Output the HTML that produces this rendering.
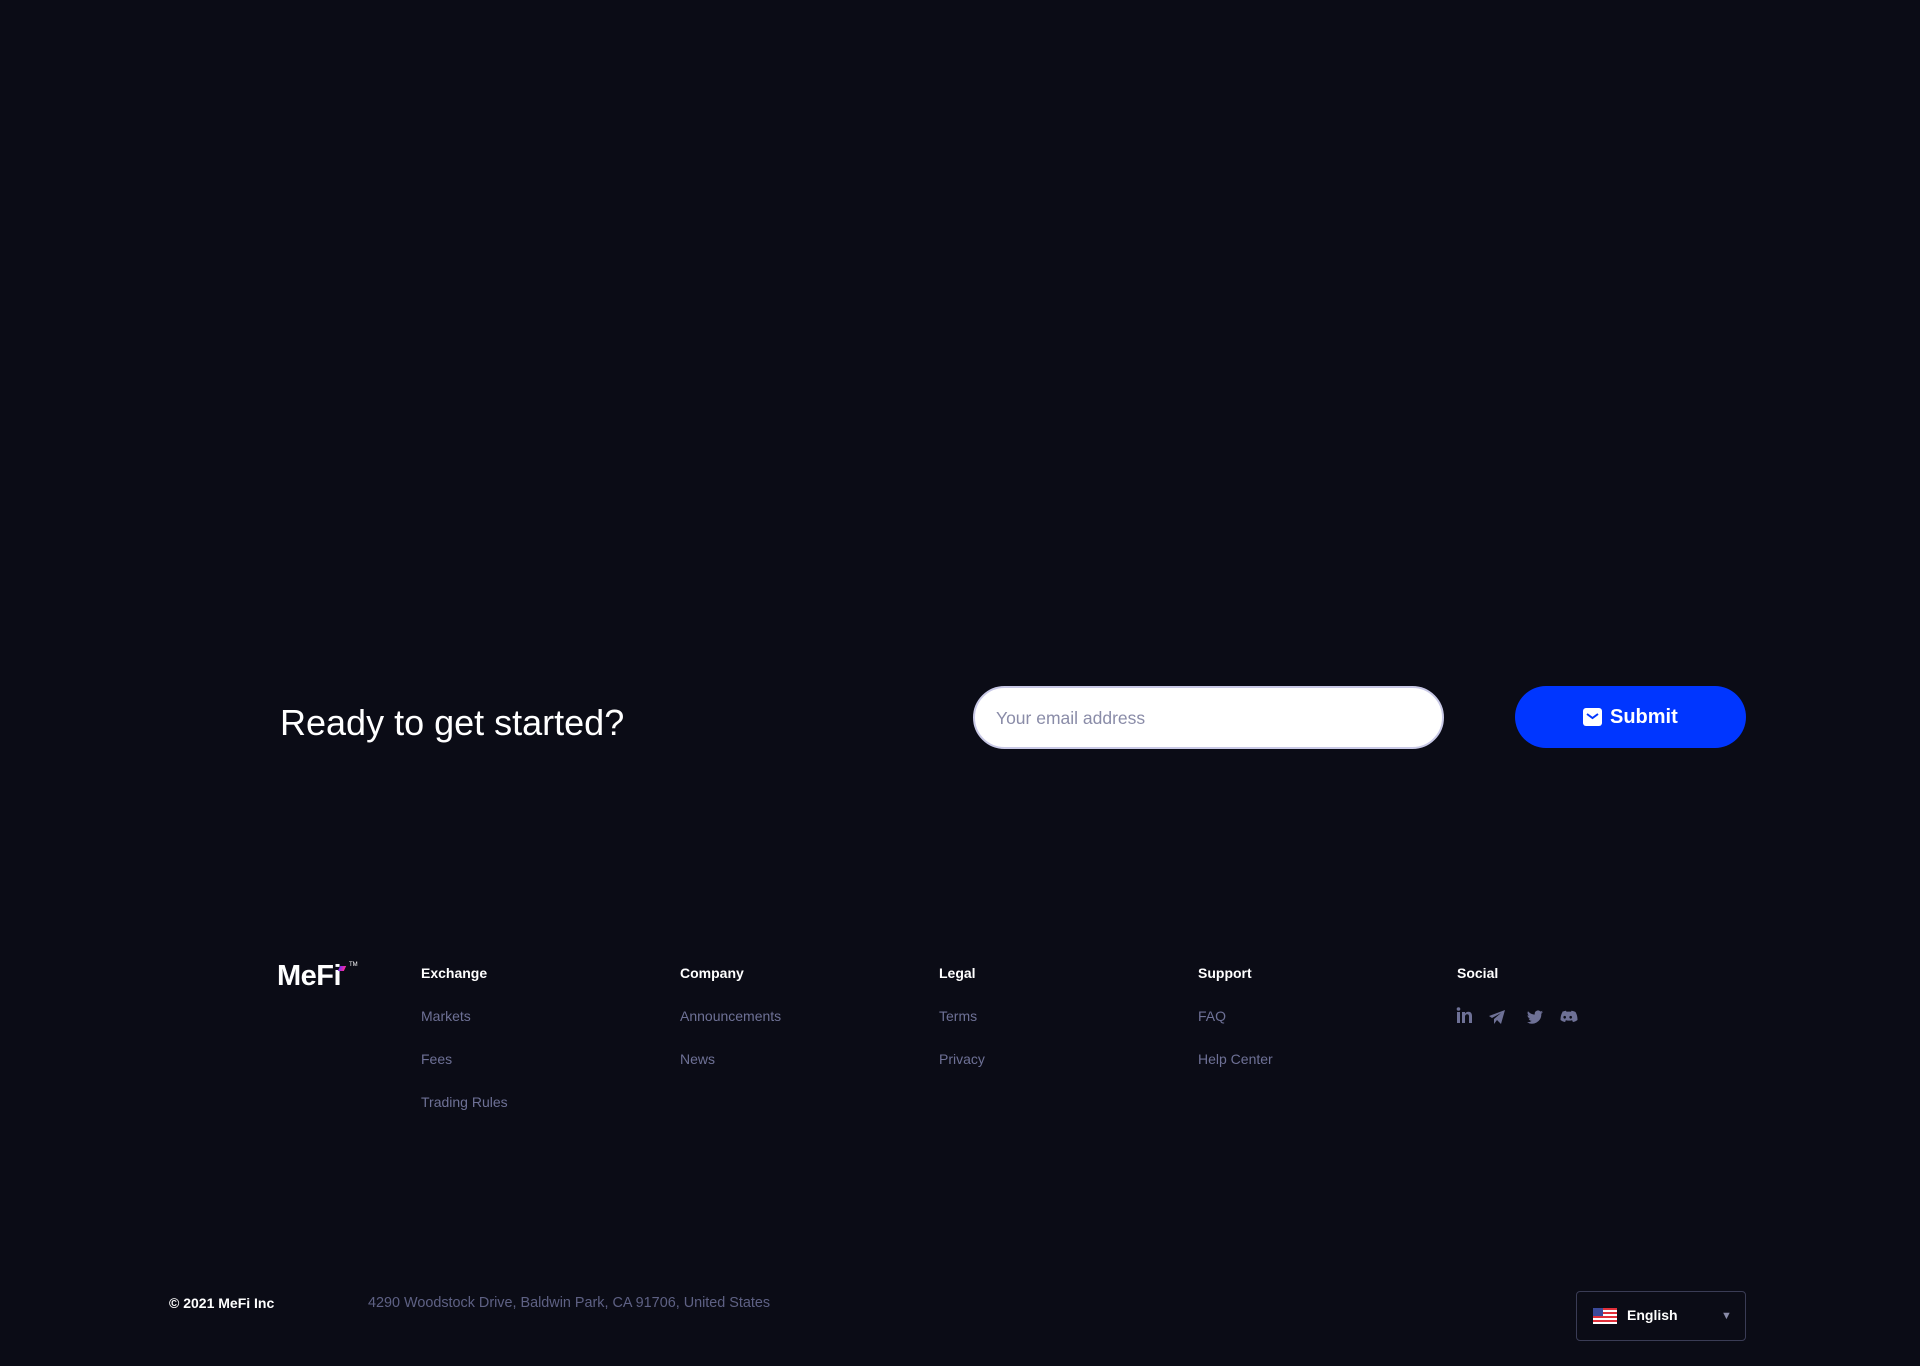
<!DOCTYPE html>
<html><head><meta charset="utf-8"><style>
*{margin:0;padding:0;box-sizing:border-box}
body{width:1920px;height:1366px;background:#0b0c16;font-family:"Liberation Sans",sans-serif;position:relative;overflow:hidden}
.a{position:absolute;white-space:nowrap}
.h{font-size:14px;font-weight:bold;color:#fff}
.l{font-size:14px;color:#6e7196}
</style></head><body>
<div class="a" style="left:280px;top:702px;font-size:36px;color:#fff;">Ready to get started?</div>
<div class="a" style="left:973px;top:686px;width:471px;height:63px;background:#fff;border:2px solid #c9c9e6;border-radius:32px;"></div>
<div class="a" style="left:996px;top:708px;font-size:17.5px;color:#8a8ca8;">Your email address</div>
<div class="a" style="left:1515px;top:686px;width:231px;height:62px;background:#0036ff;border-radius:31px;"></div>
<div class="a" style="left:1583px;top:708px;width:19px;height:18px;background:#fff;border-radius:3px;"></div>
<svg class="a" style="left:1583px;top:708px" width="19" height="18"><path d="M4 6l5.5 4 5.5-4" stroke="#0036ff" stroke-width="2" fill="none"/></svg>
<div class="a" style="left:1610px;top:706px;font-size:20px;font-weight:bold;color:#fff;">Submit</div>

<div class="a" style="left:277px;top:960px;font-size:29px;font-weight:bold;color:#fff;letter-spacing:-0.5px">MeFi</div>
<div class="a" style="left:339px;top:966px;width:6px;height:5px;background:linear-gradient(90deg,#7b2cf0,#ff2d9b);transform:skewX(-25deg)"></div>
<div class="a" style="left:349px;top:962px;font-size:6px;color:#fff;">TM</div>

<div class="a h" style="left:421px;top:965px">Exchange</div>
<div class="a h" style="left:680px;top:965px">Company</div>
<div class="a h" style="left:939px;top:965px">Legal</div>
<div class="a h" style="left:1198px;top:965px">Support</div>
<div class="a h" style="left:1457px;top:965px">Social</div>
<div class="a l" style="left:421px;top:1008px">Markets</div>
<div class="a l" style="left:421px;top:1051px">Fees</div>
<div class="a l" style="left:421px;top:1094px">Trading Rules</div>
<div class="a l" style="left:680px;top:1008px">Announcements</div>
<div class="a l" style="left:680px;top:1051px">News</div>
<div class="a l" style="left:939px;top:1008px">Terms</div>
<div class="a l" style="left:939px;top:1051px">Privacy</div>
<div class="a l" style="left:1198px;top:1008px">FAQ</div>
<div class="a l" style="left:1198px;top:1051px">Help Center</div>
<svg class="a" style="left:1456px;top:1007px" width="130" height="20" fill="#6e7196">
<rect x="1" y="5" width="3" height="11"/><circle cx="2.5" cy="2" r="1.8"/><path d="M6 5h3v1.5c.8-1.2 2-1.8 3.3-1.8 2.5 0 3.7 1.5 3.7 4.3V16h-3v-6.5c0-1.4-.5-2.2-1.7-2.2S9 8.2 9 9.8V16H6z"/>
<path d="M33 9l16-6-4 14-4-4-3 4v-5l7-6-9 5z"/>
<g transform="translate(7 0)"><path d="M80 5c-.6.3-1.2.4-1.9.5.7-.4 1.2-1 1.4-1.8-.6.4-1.3.6-2.1.8a3.3 3.3 0 0 0-5.6 3C69 7.4 66.600 6.100 65 4.200c-.9 1.500-.4 3.400 1 4.400-.5 0-1-.2-1.500-.4 0 1.600 1.100 3 2.600 3.300-.5.100-1 .200-1.500.100.400 1.300 1.700 2.300 3.100 2.300A6.600 6.600 0 0 1 64 15.200 9.300 9.300 0 0 0 78.300 7.100V6.700c.700-.500 1.200-1 1.700-1.700z"/></g>
<path d="M106 5c2-1 4-1.200 4-1.200l.5 1c1.500-.2 3-.2 4.500 0l.5-1s2 .2 4 1.200c1.500 2.500 2 5 2 8-1.500 1.200-3 1.800-4.500 2l-1-1.500c.6-.2 1.200-.5 1.700-.9-2.800 1.400-6.600 1.400-9.400 0 .5.400 1.100.700 1.700.9l-1 1.500c-1.500-.2-3-.8-4.500-2 0-3 .5-5.500 2-8zm4 5.200a1.300 1.400 0 1 0 0 .1zm6 0a1.300 1.400 0 1 0 0 .1z"/>
</svg>

<div class="a" style="left:169px;top:1295px;font-size:14px;font-weight:bold;color:#fff;">© 2021 MeFi Inc</div>
<div class="a" style="left:368px;top:1295px;font-size:14.4px;color:#5e6184;">4290 Woodstock Drive, Baldwin Park, CA 91706, United States</div>
<div class="a" style="left:1576px;top:1291px;width:170px;height:50px;border:1px solid #3a3c55;border-radius:4px;"></div>
<svg class="a" style="left:1593px;top:1308px" width="24" height="16"><rect width="24" height="16" fill="#fff"/><g fill="#e0303a"><rect y="0" width="24" height="2"/><rect y="4" width="24" height="2"/><rect y="8" width="24" height="2"/><rect y="12" width="24" height="2"/></g><rect width="10" height="8" fill="#3b4a9a"/></svg>
<div class="a" style="left:1627px;top:1307px;font-size:14px;font-weight:bold;color:#fff;">English</div>
<div class="a" style="left:1721px;top:1310px;font-size:11px;color:#8a8ca8;">▼</div>
</body></html>
